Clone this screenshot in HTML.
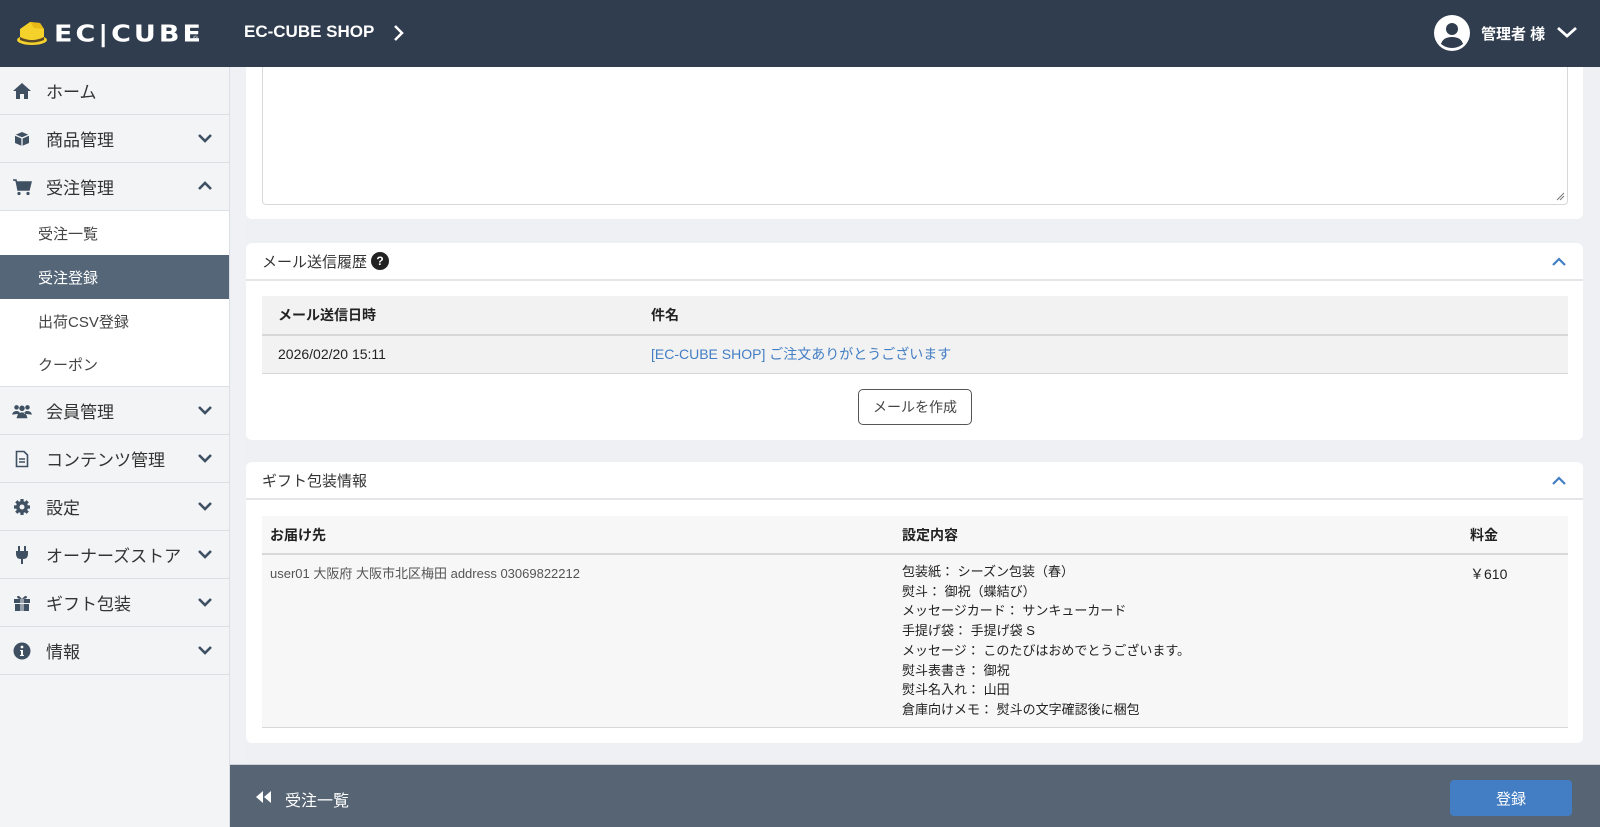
<!DOCTYPE html>
<html><head><meta charset="utf-8"><style>
*{box-sizing:border-box;margin:0;padding:0}
body{width:1600px;height:827px;overflow:hidden;background:#eef0f4;font-family:"Liberation Sans","Noto Sans CJK JP",sans-serif;color:#222;position:relative}
.hdr{position:absolute;left:0;top:0;width:1600px;height:67px;background:#2f3d4e;color:#fff;z-index:10}
.side{position:absolute;left:0;top:67px;width:230px;height:760px;background:#f3f4f6;border-right:1px solid #dcdfe5}
.it{height:48px;border-bottom:1px solid #dcdfe5;display:flex;align-items:center;font-size:17px;color:#333;position:relative}
.it .ic{width:20px;margin-left:12px;margin-right:14px;display:flex;justify-content:center}
.it .ch{position:absolute;right:16px;top:17px}
.sub{height:44px;display:flex;align-items:center;padding-left:38px;font-size:15px;color:#444;background:#fff}
.sub.act{background:#546678;color:#fff}
.card{position:absolute;left:246px;width:1337px;background:#fff;border-radius:6px}
.ch2{position:absolute;right:16px}
.abs{position:absolute}
table{border-collapse:collapse}
</style></head><body>
<div class="hdr">
 <svg class="abs" style="left:16px;top:19px" width="36" height="28" viewBox="0 0 36 28"><path d="M4 10 L14 3 L24 4 L28 10 L28 20 Q16 25 4 20Z" fill="#f5d22b"/><path d="M14 3 L24 4 L28 10 L18 9Z" fill="#e8b917"/><ellipse cx="16" cy="21" rx="15" ry="5" fill="#f5d22b"/><path d="M4 18 Q16 24 28 18 L28 21 Q16 26 4 21Z" fill="#5a4a2a"/></svg>
 <div class="abs" style="left:54px;top:19px;font-size:27px;font-weight:bold;letter-spacing:3px;font-family:'DejaVu Sans',sans-serif;transform:scaleY(.85)">EC|CUBE</div>
 <div class="abs" style="left:193px;top:36px;font-size:7px">®</div>
 <div class="abs" style="left:244px;top:22px;font-size:17px;font-weight:bold">EC-CUBE SHOP</div>
 <svg class="abs" style="left:393px;top:24px" width="12" height="18" viewBox="0 0 12 18"><path d="M2 2 L9 9 L2 16" stroke="#fff" stroke-width="2.5" fill="none"/></svg>
 <svg class="abs" style="left:1434px;top:15px" width="36" height="36" viewBox="0 0 36 36"><circle cx="18" cy="18" r="18" fill="#fff"/><circle cx="18" cy="14" r="6" fill="#2f3d4e"/><path d="M7 29 Q9 22 18 22 Q27 22 29 29 Q24 33 18 33 Q12 33 7 29Z" fill="#2f3d4e"/></svg>
 <div class="abs" style="left:1481px;top:23px;font-size:15px;font-weight:bold">管理者 様</div>
 <svg class="abs" style="left:1556px;top:25px" width="22" height="14" viewBox="0 0 22 14"><path d="M2 3 L11 11 L20 3" stroke="#fff" stroke-width="2.8" fill="none"/></svg>
</div>
<div class="side">
 <div class="it"><span class="ic"><svg width="20" height="18" viewBox="0 0 20 18"><path d="M10 1 L19 9 L16 9 L16 17 L12 17 L12 12 L8 12 L8 17 L4 17 L4 9 L1 9Z" fill="#3f5062"/></svg></span>ホーム</div>
 <div class="it"><span class="ic"><svg width="16" height="16" viewBox="0 0 16 16"><path d="M8 1 L15 4 L15 12 L8 15 L1 12 L1 4Z" fill="#3f5062"/><path d="M1 4 L8 7 L15 4 M8 7 L8 15" stroke="#f3f4f6" stroke-width="1.3" fill="none"/></svg></span>商品管理<svg class="ch" width="16" height="12" viewBox="0 0 16 12"><path d="M2 3 L8 9 L14 3" stroke="#3f5062" stroke-width="2.6" fill="none"/></svg></div>
 <div class="it"><span class="ic"><svg width="20" height="18" viewBox="0 0 20 18"><path d="M1 2 L4 2 L6 12 L17 12 L19 4 L5 4" fill="#3f5062" stroke="#3f5062" stroke-width="1.5"/><circle cx="7" cy="15.5" r="1.6" fill="#3f5062"/><circle cx="16" cy="15.5" r="1.6" fill="#3f5062"/></svg></span>受注管理<svg class="ch" width="16" height="12" viewBox="0 0 16 12"><path d="M2 9 L8 3 L14 9" stroke="#3f5062" stroke-width="2.6" fill="none"/></svg></div>
 <div class="sub">受注一覧</div>
 <div class="sub act">受注登録</div>
 <div class="sub">出荷CSV登録</div>
 <div class="sub" style="border-bottom:1px solid #dcdfe5">クーポン</div>
 <div class="it"><span class="ic"><svg width="22" height="16" viewBox="0 0 22 16"><circle cx="5" cy="4" r="2.5" fill="#3f5062"/><circle cx="17" cy="4" r="2.5" fill="#3f5062"/><circle cx="11" cy="5" r="3" fill="#3f5062"/><path d="M0 12 Q1 8 5 8 Q8 8 9 11Z M22 12 Q21 8 17 8 Q14 8 13 11Z M5 16 Q6 9.5 11 9.5 Q16 9.5 17 16Z" fill="#3f5062"/></svg></span>会員管理<svg class="ch" width="16" height="12" viewBox="0 0 16 12"><path d="M2 3 L8 9 L14 3" stroke="#3f5062" stroke-width="2.6" fill="none"/></svg></div>
 <div class="it"><span class="ic"><svg width="14" height="18" viewBox="0 0 14 18"><path d="M1.5 1.5 L9 1.5 L12.5 5 L12.5 16.5 L1.5 16.5Z" stroke="#3f5062" stroke-width="1.6" fill="none"/><path d="M4 9 L10 9 M4 12 L10 12" stroke="#3f5062" stroke-width="1.4"/></svg></span>コンテンツ管理<svg class="ch" width="16" height="12" viewBox="0 0 16 12"><path d="M2 3 L8 9 L14 3" stroke="#3f5062" stroke-width="2.6" fill="none"/></svg></div>
 <div class="it"><span class="ic"><svg width="18" height="18" viewBox="0 0 18 18"><circle cx="9" cy="9" r="6" fill="#3f5062"/><path d="M9 1 L9 17 M1 9 L17 9 M3.3 3.3 L14.7 14.7 M14.7 3.3 L3.3 14.7" stroke="#3f5062" stroke-width="3.2"/><circle cx="9" cy="9" r="2.5" fill="#f3f4f6"/></svg></span>設定<svg class="ch" width="16" height="12" viewBox="0 0 16 12"><path d="M2 3 L8 9 L14 3" stroke="#3f5062" stroke-width="2.6" fill="none"/></svg></div>
 <div class="it"><span class="ic"><svg width="14" height="20" viewBox="0 0 14 20"><path d="M4 1 L4 6 M10 1 L10 6" stroke="#3f5062" stroke-width="2"/><path d="M1 6 L13 6 L13 9 Q13 14 8 14 L8 19 L6 19 L6 14 Q1 14 1 9Z" fill="#3f5062"/></svg></span>オーナーズストア<svg class="ch" width="16" height="12" viewBox="0 0 16 12"><path d="M2 3 L8 9 L14 3" stroke="#3f5062" stroke-width="2.6" fill="none"/></svg></div>
 <div class="it"><span class="ic"><svg width="18" height="18" viewBox="0 0 18 18"><rect x="1" y="5" width="16" height="4" fill="#3f5062"/><rect x="2" y="10" width="14" height="7" fill="#3f5062"/><path d="M8 5 L8 17 M10 5 L10 17" stroke="#f3f4f6" stroke-width="1"/><path d="M9 5 Q5 0 4 3 Q4 5 9 5 Q14 5 14 3 Q13 0 9 5" fill="#3f5062"/></svg></span>ギフト包装<svg class="ch" width="16" height="12" viewBox="0 0 16 12"><path d="M2 3 L8 9 L14 3" stroke="#3f5062" stroke-width="2.6" fill="none"/></svg></div>
 <div class="it"><span class="ic"><svg width="18" height="18" viewBox="0 0 18 18"><circle cx="9" cy="9" r="8.5" fill="#3f5062"/><circle cx="9" cy="5" r="1.4" fill="#fff"/><path d="M7 8 L10 8 L10 13 L11 13 L11 14 L7 14 L7 13 L8 13 L8 9 L7 9Z" fill="#fff"/></svg></span>情報<svg class="ch" width="16" height="12" viewBox="0 0 16 12"><path d="M2 3 L8 9 L14 3" stroke="#3f5062" stroke-width="2.6" fill="none"/></svg></div>
</div>
<div class="abs" style="left:231px;top:67px;width:15px;height:698px;background:#f0f1f4"></div>

<div class="card" style="top:67px;height:152px;border-radius:0 0 6px 6px">
 <div class="abs" style="left:16px;top:0;width:1306px;height:138px;border:1px solid #d6d8dc;border-top:none;border-radius:0 0 4px 4px"></div>
 <svg class="abs" style="left:1310px;top:125px" width="9" height="9" viewBox="0 0 9 9"><path d="M1 8 L8 1 M4 8 L8 4" stroke="#777" stroke-width="1"/></svg>
</div>

<div class="card" style="top:243px;height:197px">
 <div style="height:38px;border-bottom:2px solid #e4e6ea;display:flex;align-items:center;padding-left:16px;font-size:15px;color:#333">メール送信履歴<span style="display:inline-flex;width:18px;height:18px;border-radius:9px;background:#222;color:#fff;font-size:12px;font-weight:bold;align-items:center;justify-content:center;margin-left:4px">?</span></div>
 <svg class="ch2" style="top:13px" width="16" height="11" viewBox="0 0 16 11"><path d="M2 9 L8 3 L14 9" stroke="#437ec4" stroke-width="2.2" fill="none"/></svg>
 <table class="abs" style="left:16px;top:53px;width:1306px;font-size:14px;background:#f2f2f2">
  <tr style="height:39px;border-bottom:2px solid #d8d8d8"><th style="text-align:left;padding-left:16px;width:389px">メール送信日時</th><th style="text-align:left">件名</th></tr>
  <tr style="height:38px;border-bottom:1px solid #d8d8d8"><td style="padding-left:16px">2026/02/20 15:11</td><td style="color:#437ec4">[EC-CUBE SHOP] ご注文ありがとうございます</td></tr>
 </table>
 <div class="abs" style="left:612px;top:146px;width:114px;height:36px;border:1px solid #555;border-radius:5px;display:flex;align-items:center;justify-content:center;font-size:14px;color:#444">メールを作成</div>
</div>

<div class="card" style="top:462px;height:281px">
 <div style="height:38px;border-bottom:2px solid #e4e6ea;display:flex;align-items:center;padding-left:16px;font-size:15px;color:#333">ギフト包装情報</div>
 <svg class="ch2" style="top:13px" width="16" height="11" viewBox="0 0 16 11"><path d="M2 9 L8 3 L14 9" stroke="#437ec4" stroke-width="2.2" fill="none"/></svg>
 <table class="abs" style="left:16px;top:54px;width:1306px;background:#f7f7f7">
  <tr style="height:38px;border-bottom:2px solid #d8d8d8;font-size:14px"><th style="text-align:left;padding-left:8px;width:640px">お届け先</th><th style="text-align:left;width:568px">設定内容</th><th style="text-align:left">料金</th></tr>
  <tr style="height:173px;border-bottom:1px solid #d8d8d8;vertical-align:top"><td style="padding:8px 0 0 8px;font-size:13px;color:#555">user01 大阪府 大阪市北区梅田 address 03069822212</td><td style="padding-top:7px;font-size:13px;line-height:19.7px;color:#222">包装紙： シーズン包装（春）<br>熨斗： 御祝（蝶結び）<br>メッセージカード： サンキューカード<br>手提げ袋： 手提げ袋 S<br>メッセージ： このたびはおめでとうございます。<br>熨斗表書き： 御祝<br>熨斗名入れ： 山田<br>倉庫向けメモ： 熨斗の文字確認後に梱包</td><td style="padding-top:9px;font-size:14px">￥610</td></tr>
 </table>
</div>

<div class="abs" style="left:230px;top:764px;width:1370px;height:63px;background:#566473;border-top:1px solid #cfd3d9">
 <svg class="abs" style="left:26px;top:26px" width="16" height="12" viewBox="0 0 16 12"><path d="M7 0 L0 6 L7 12Z M15 0 L8 6 L15 12Z" fill="#fff"/></svg>
 <div class="abs" style="left:55px;top:22px;font-size:16px;color:#fff">受注一覧</div>
 <div class="abs" style="left:1220px;top:15px;width:122px;height:36px;background:#437ec4;border-radius:4px;color:#fff;font-size:15px;display:flex;align-items:center;justify-content:center">登録</div>
</div>
</body></html>
